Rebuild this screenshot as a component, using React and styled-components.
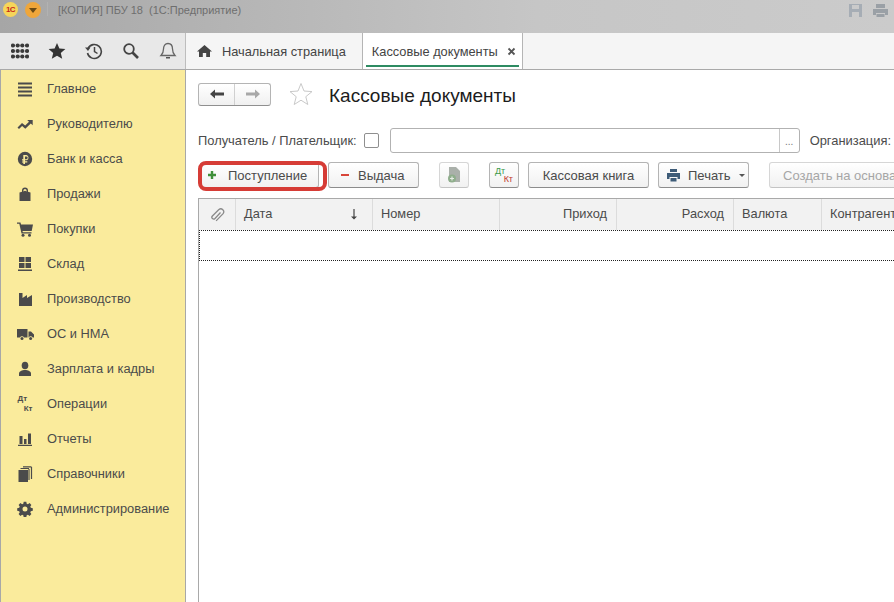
import React from 'react';
import styled, { createGlobalStyle } from 'styled-components';

const Global = createGlobalStyle`
  html, body { margin: 0; padding: 0; background: #fff; overflow: hidden; }
  body { font-family: "Liberation Sans", Arial, sans-serif; font-size: 13px; color: #4a4a4a; }
`;

const Page = styled.div`
  width: 894px;
  height: 602px;
  display: flex;
  flex-direction: column;
  overflow: hidden;
`;

const TitleBar = styled.div`
  height: 33px;
  flex: none;
  box-sizing: border-box;
  display: flex;
  align-items: flex-start;
  padding: 2px 5px 0 3px;
  background: linear-gradient(90deg, #a6a6a6 0%, #b4b4b4 25%, #c6c6c6 60%, #cbcbcb 100%);
`;

const Round = styled.div`
  width: ${p => p.$size}px;
  height: ${p => p.$size}px;
  border-radius: 50%;
  flex: none;
  margin-right: ${p => p.$gap}px;
  background: ${p => p.$bg};
  display: flex;
  align-items: center;
  justify-content: center;
  color: #c8281a;
  font-size: 8px;
  font-weight: 700;
  letter-spacing: -0.5px;
`;

const TitleSep = styled.div`
  width: 1px;
  height: 14px;
  background: #b2b2b2;
  margin-right: 10px;
  flex: none;
`;

const TitleText = styled.div`
  font-size: 11px;
  line-height: 17px;
  color: #6e6e6e;
  flex: 1;
  white-space: pre;
`;

const TitleIcons = styled.div`
  display: flex;
  gap: 9px;
  margin-top: 1px;
`;

const TopRow = styled.div`
  height: 37px;
  flex: none;
  box-sizing: border-box;
  display: flex;
  background: #f5f5f5;
  border-bottom: 1px solid #a9a9a9;
`;

const TopIcons = styled.div`
  width: 186px;
  flex: none;
  box-sizing: border-box;
  background: #e8e8e8;
  border-right: 1px solid #bdbdbd;
  display: flex;
  align-items: center;
  padding-left: 11px;
  gap: 19px;
`;

const Tab = styled.div`
  display: flex;
  align-items: center;
  position: relative;
  height: 36px;
  box-sizing: border-box;
  font-size: 12.8px;
  color: #444;
  padding: ${p => p.$active ? '0 6px 0 9px' : '0 16px 0 11px'};
  background: ${p => p.$active ? '#fff' : 'transparent'};
  border-left: ${p => p.$active ? '1px solid #b5b5b5' : 'none'};
  border-right: ${p => p.$active ? '1px solid #b5b5b5' : 'none'};
  gap: ${p => p.$active ? '9px' : '10px'};
`;

const TabLine = styled.div`
  position: absolute;
  left: 3px;
  right: 3px;
  bottom: 2px;
  height: 2px;
  background: #2e8b62;
`;

const Body = styled.div`
  flex: 1;
  display: flex;
  min-height: 0;
`;

const Sidebar = styled.div`
  width: 186px;
  flex: none;
  box-sizing: border-box;
  background: #faeb9c;
  border-left: 1px solid #a8a8a8;
  border-right: 1px solid #a8a8a8;
  padding-top: 1px;
`;

const SideItem = styled.div`
  height: 35px;
  display: flex;
  align-items: center;
  font-size: 12.85px;
  color: #4b4b4b;
`;

const SideIcon = styled.div`
  width: 46px;
  flex: none;
  display: flex;
  justify-content: center;
  padding-left: 2px;
  box-sizing: border-box;
`;

const Main = styled.div`
  flex: 1;
  min-width: 0;
  padding: 12px 0 0 12px;
  display: flex;
  flex-direction: column;
`;

const Head = styled.div`
  display: flex;
  align-items: center;
  height: 24px;
`;

const NavGroup = styled.div`
  width: 73px;
  height: 23px;
  box-sizing: border-box;
  display: flex;
  border: 1px solid #b4b4b4;
  border-bottom-color: #8f8f8f;
  border-radius: 3px;
  background: linear-gradient(#ffffff, #f0f0f0);
`;

const NavBtn = styled.div`
  flex: 1;
  display: flex;
  align-items: center;
  justify-content: center;
  & + & { border-left: 1px solid #d0d0d0; }
`;

const StarBox = styled.div`
  margin: 0 16px 0 18px;
  height: 24px;
`;

const Heading = styled.div`
  font-size: 19px;
  color: #1c1c1c;
  padding-top: 3px;
`;

const FilterRow = styled.div`
  margin-top: 22px;
  height: 25px;
  display: flex;
  align-items: center;
  white-space: nowrap;
`;

const Label = styled.span`
  font-size: 12.9px;
  color: #4b4b4b;
`;

const Check = styled.div`
  width: 15px;
  height: 15px;
  box-sizing: border-box;
  border: 1px solid #8f8f8f;
  border-radius: 2px;
  margin: 0 11px 0 7px;
  background: #fff;
  flex: none;
`;

const Input = styled.div`
  width: 410px;
  height: 25px;
  box-sizing: border-box;
  flex: none;
  border: 1px solid #b2b2b2;
  border-radius: 3px;
  display: flex;
  justify-content: flex-end;
  margin-right: 10px;
`;

const Dots = styled.div`
  width: 20px;
  box-sizing: border-box;
  border-left: 1px solid #c8c8c8;
  text-align: center;
  font-size: 10px;
  line-height: 26px;
  color: #777;
`;

const Toolbar = styled.div`
  margin-top: 9px;
  height: 26px;
  display: flex;
  align-items: center;
  white-space: nowrap;
  position: relative;
`;

const Btn = styled.div`
  height: 26px;
  width: ${p => p.$w}px;
  flex: none;
  margin-left: ${p => p.$ml || 0}px;
  box-sizing: border-box;
  display: flex;
  align-items: center;
  justify-content: ${p => p.$center ? 'center' : 'flex-start'};
  padding-left: ${p => p.$center ? 0 : p.$pl || 0}px;
  gap: ${p => p.$gap || 0}px;
  border: 1px solid ${p => p.$off ? '#d6d6d6' : '#b4b4b4'};
  border-bottom-color: ${p => p.$off ? '#c4c4c4' : '#8c8c8c'};
  border-radius: 3px;
  background: linear-gradient(#ffffff, #f1f1f1);
  font-size: 13px;
  color: ${p => p.$off ? '#a6a6a6' : '#4b4b4b'};
`;

const Highlight = styled.div`
  position: absolute;
  left: 0;
  top: -1px;
  width: 129px;
  height: 30px;
  box-sizing: border-box;
  border: 4px solid #d63c36;
  border-radius: 8px;
`;

const Caret = styled.span`
  width: 0;
  height: 0;
  border-left: 3px solid transparent;
  border-right: 3px solid transparent;
  border-top: 3px solid #555;
  margin-left: 1px;
`;

const DtKt = styled.div`
  display: flex;
  flex-direction: column;
  font-family: "Liberation Sans", Arial, sans-serif;
  font-size: ${p => p.$fs}px;
  line-height: ${p => p.$lh}px;
  width: ${p => p.$w}px;
`;

const Dt = styled.span`
  color: ${p => p.$c};
  text-align: ${p => p.$r ? 'right' : 'left'};
  font-weight: ${p => p.$bold ? 700 : 400};
`;

const Table = styled.div`
  margin-top: 10px;
  flex: 1;
  min-height: 0;
  border-left: 1px solid #a9a9a9;
  border-top: 1px solid #a9a9a9;
`;

const HeaderRow = styled.div`
  display: flex;
  height: 31px;
  background: #f2f2f2;
  white-space: nowrap;
`;

const Cell = styled.div`
  width: ${p => p.$w}px;
  flex: none;
  box-sizing: border-box;
  display: flex;
  align-items: center;
  justify-content: ${p => p.$right ? 'flex-end' : 'space-between'};
  padding: 0 ${p => p.$right ? '9px' : '14px'} 2px 8px;
  border-right: 1px solid #dcdcdc;
  font-size: 12.8px;
  color: #4b4b4b;
`;

const ClipCell = styled(Cell)`
  justify-content: center;
  padding: 0;
`;

const SelectedRow = styled.div`
  height: 31px;
  box-sizing: border-box;
  border-top: 1px dotted #222;
  border-bottom: 1px dotted #222;
  border-left: 1px dotted #222;
`;

const Ic = ({ children, w = 16, h = 16, vb, fill = '#4b4b4b' }) => (
  <svg width={w} height={h} viewBox={vb || `0 0 ${w} ${h}`} fill={fill}>{children}</svg>
);

const menu = [
  ['Главное', <Ic><path d="M1 1.500h14v2H1zM1 5.500h14v2H1zM1 9.500h14v2H1zM1 13.500h14v2H1z" /></Ic>],
  ['Руководителю', <Ic><path d="M0.500 11.500l4.500-4.500 3.200 2.500 3.800-3.700-1.800-1.800h5.500v5.300l-1.900-1.800-5.500 5.300L5.100 10 2 13z" /></Ic>],
  ['Банк и касса', <Ic><path fillRule="evenodd" d="M8 .8a7.200 7.200 0 1 1 0 14.400A7.200 7.200 0 0 1 8 .8zM6.300 4v4.200H5v1.300h1.300v.9H5v1.200h1.300V13h1.700v-1.600h2.300v-1.200H8v-.9h1.500a2.750 2.750 0 0 0 0-5.300zM8 5.400h1.300a1.400 1.400 0 0 1 0 2.800H8z" /></Ic>],
  ['Продажи', <Ic><path fillRule="evenodd" d="M2.500 6.500l2.500-.8V4.500a3 3 0 0 1 6 0v1.200l2.500.8V15h-11zM6.400 5.500l1.600-.8 1.600.8V4.500a1.600 1.600 0 0 0-3.200 0z" /></Ic>],
  ['Покупки', <Ic><path d="M0 1.500h3.500l.5 2H16l-1.300 6.500H5.500l.3 1.300h8.700v1.300H4.500L2.300 2.800H0z" /><circle cx="6" cy="14.300" r="1.500" /><circle cx="12.500" cy="14.300" r="1.500" /></Ic>],
  ['Склад', <Ic><path d="M2 1h5.500v5H2zM8.500 1H14v5H8.500zM2 7h5.500v5H2zM8.500 7H14v5H8.500zM1 13.500h14V15H1z" /></Ic>],
  ['Производство', <Ic><path d="M2 15V2h3.500v5l4.500-3v3l5-3v11z" /></Ic>],
  ['ОС и НМА', <Ic w={17}><path d="M0 3h10.500v8.500H7a2.200 2.200 0 0 0-4 0H0zM11.500 5.500H14l3 3v3h-1.300a2.200 2.200 0 0 0-4 0h-.2z" /><circle cx="5" cy="12.500" r="1.500" /><circle cx="13.600" cy="12.500" r="1.500" /></Ic>],
  ['Зарплата и кадры', <Ic><ellipse cx="8" cy="4.500" rx="3.300" ry="3.800" /><path d="M2 15v-2.500C2 10.500 5 9 8 9s6 1.500 6 3.500V15z" /></Ic>],
  ['Операции', <DtKt $fs={8} $lh={10} $w={15}><Dt $c="#4b4b4b" $bold>Дт</Dt><Dt $c="#4b4b4b" $bold $r>Кт</Dt></DtKt>],
  ['Отчеты', <Ic><path d="M2.500 5H5.500v8h-3zM7 8h2.500v5H7zM11 2.500h3v10.500h-3zM1 13.800h14V15H1z" /></Ic>],
  ['Справочники', <Ic><path d="M1.500 4h9.500v12H1.500z" /><path d="M12 3v11M14.500 1v12M3.500 2.500H12M6 .8h8.500" fill="none" stroke="#4b4b4b" strokeWidth="1.200" /></Ic>],
  ['Администрирование', <Ic><path fillRule="evenodd" d="M6.700 1h2.600l.4 2 1.200.5 1.700-1.100 1.800 1.800-1.100 1.700.5 1.200 2 .4v2.600l-2 .4-.5 1.200 1.100 1.700-1.800 1.800-1.700-1.100-1.200.5-.4 2H6.700l-.4-2-1.200-.5-1.700 1.100-1.800-1.800 1.100-1.700-.5-1.200-2-.4V7.500l2-.4.5-1.200-1.100-1.700 1.800-1.800 1.700 1.100 1.200-.5zM8 5.800a2.500 2.500 0 1 0 0 5A2.500 2.500 0 0 0 8 5.800z" transform="translate(0 -.3)" /></Ic>],
];

const columns = [
  ['Дата', 137, false, true],
  ['Номер', 127],
  ['Приход', 117, true],
  ['Расход', 117, true],
  ['Валюта', 88],
  ['Контрагент', 120],
];

export default function App() {
  return (
    <Page>
      <Global />
      <TitleBar>
        <Round $bg="#f6d55a" $gap={7} $size={15}>1С</Round>
        <Round $bg="#efa63a" $gap={6} $size={16}>
          <svg width="8" height="5" viewBox="0 0 8 5"><path d="M0 0h8L4 5z" fill="#6a4a14" /></svg>
        </Round>
        <TitleSep />
        <TitleText>[КОПИЯ] ПБУ 18  (1С:Предприятие)</TitleText>
        <TitleIcons>
          <Ic w={15} h={15} fill="#a6adb5"><path fillRule="evenodd" d="M1 1h13v13H1zM4 2v4h7V2zM4 9v5h7V9z" /></Ic>
          <Ic w={17} h={15} fill="#9aa0a6"><path d="M4 1h9v4H4zM1 6h15v6h-3v-2H4v2H1zM4.500 11h8v3h-8z" /></Ic>
        </TitleIcons>
      </TitleBar>
      <TopRow>
        <TopIcons>
          <Ic w={18} h={16} fill="#3a3a3a"><g>{[2.5, 8, 13.5].map(y => [2, 6.700, 11.300, 16].map(x => <circle key={`${x}-${y}`} cx={x} cy={y} r="2.100" />))}</g></Ic>
          <Ic w={18} h={18} fill="#333"><path d="M9 1l2.400 5.500 6 .5-4.600 3.900 1.400 5.900L9 13.700l-5.200 3.100 1.400-5.900L.6 7l6-.5z" /></Ic>
          <Ic w={18} h={18} fill="none"><path d="M3 6.500A7 7 0 1 1 2.500 11" stroke="#444" strokeWidth="1.600" /><path d="M0 5.500h5.500L3 9z" fill="#444" /><path d="M9.500 5v4.500l3 2" stroke="#444" strokeWidth="1.500" /></Ic>
          <Ic w={18} h={18} fill="none"><circle cx="7" cy="7" r="4.800" stroke="#444" strokeWidth="1.800" /><path d="M10.500 10.500l5.500 5.500" stroke="#444" strokeWidth="2.600" /></Ic>
          <Ic w={18} h={18} fill="none"><path d="M9 1.500c3 0 4.500 2.500 4.500 5.500 0 3 1 5 2.500 6.500H2C3.500 12 4.500 10 4.500 7c0-3 1.500-5.500 4.500-5.500z" stroke="#666" strokeWidth="1.300" /><path d="M7 15h4v1.500H7z" fill="#555" /></Ic>
        </TopIcons>
        <Tab>
          <Ic w={15} h={14} fill="#444"><path d="M7.500 1L15 7.500h-2V13H9.200V9H5.800v4H2V7.500H0z" /></Ic>
          Начальная страница
        </Tab>
        <Tab $active>
          Кассовые документы
          <Ic w={9} h={9} fill="none"><path d="M1.500 1.500l6 6M7.500 1.500l-6 6" stroke="#555" strokeWidth="1.800" /></Ic>
          <TabLine />
        </Tab>
      </TopRow>
      <Body>
        <Sidebar>
          {menu.map(([name, icon]) => (
            <SideItem key={name}>
              <SideIcon>{icon}</SideIcon>
              {name}
            </SideItem>
          ))}
        </Sidebar>
        <Main>
          <Head>
            <NavGroup>
              <NavBtn><Ic w={14} h={10} fill="#444"><path d="M0 5l5-4.500v3h9v3H5v3z" /></Ic></NavBtn>
              <NavBtn><Ic w={14} h={10} fill="#a8a8a8"><path d="M14 5L9 .5v3H0v3h9v3z" /></Ic></NavBtn>
            </NavGroup>
            <StarBox>
              <Ic w={24} h={24} fill="none"><path d="M12 1.500l3 7.500 8 .6-6.200 5.100 2 7.800L12 18.200 5.200 22.500l2-7.800L1 9.600 9 9z" stroke="#c9c9c9" strokeWidth="1" /></Ic>
            </StarBox>
            <Heading>Кассовые документы</Heading>
          </Head>
          <FilterRow>
            <Label>Получатель / Плательщик:</Label>
            <Check />
            <Input><Dots>...</Dots></Input>
            <Label>Организация:</Label>
          </FilterRow>
          <Toolbar>
            <Btn $w={119} $ml={2} $pl={6} $gap={11}>
              <Ic w={10} h={10} fill="#3f8f3a"><path d="M3.800 1h2.400v2.800H9v2.400H6.200V9H3.800V6.200H1V3.800h2.800z" /></Ic>
              Поступление
            </Btn>
            <Btn $w={91} $ml={9} $pl={11} $gap={8}>
              <Ic w={10} h={10} fill="#d8453a"><path d="M1 4h8v2H1z" /></Ic>
              Выдача
            </Btn>
            <Btn $w={30} $ml={20} $center $off>
              <Ic w={16} h={18} fill="#aab0aa"><path d="M3 1h7l4 4v11H3z" /><circle cx="6" cy="12.500" r="4" fill="#8fae8c" /><path d="M5.400 10.500h1.200v1.400H8v1.200H6.600v1.400H5.400v-1.400H4v-1.200h1.400z" fill="#e6ece5" /></Ic>
            </Btn>
            <Btn $w={30} $ml={20} $center>
              <DtKt $fs={9} $lh={8} $w={18}><Dt $c="#3a9a4a">Дт</Dt><Dt $c="#c0392f" $r>Кт</Dt></DtKt>
            </Btn>
            <Btn $w={121} $ml={9} $center>Кассовая книга</Btn>
            <Btn $w={91} $ml={9} $pl={7} $gap={7}>
              <Ic w={15} h={14} fill="#3e5c78"><path d="M4 1h7v3H4zM1 5h13v6h-2.500V9h-8v2H1zM4.500 10h6v3.500h-6z" /></Ic>
              Печать
              <Caret />
            </Btn>
            <Btn $w={140} $ml={20} $pl={13} $off>Создать на основании</Btn>
            <Highlight />
          </Toolbar>
          <Table>
            <HeaderRow>
              <ClipCell $w={37}>
                <Ic w={16} h={16} fill="none"><path d="M11.500 5.500l-5.500 6a1.800 1.800 0 0 1-2.600-2.500l6.500-6.500a3 3 0 0 1 4.200 4.200l-7 7.200" stroke="#8a8a8a" strokeWidth="1.300" /></Ic>
              </ClipCell>
              {columns.map(([name, w, right, sorted]) => (
                <Cell key={name} $w={w} $right={right}>
                  {name}
                  {sorted && <Ic w={8} h={12} fill="#444"><path d="M3.400 1h1.200v7.500H7L4 11.500 1 8.500h2.400z" /></Ic>}
                </Cell>
              ))}
            </HeaderRow>
            <SelectedRow />
          </Table>
        </Main>
      </Body>
    </Page>
  );
}
